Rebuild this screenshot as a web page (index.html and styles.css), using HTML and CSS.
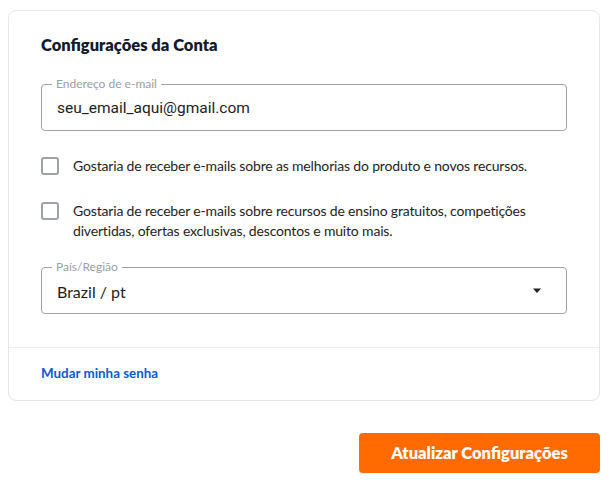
FILE: index.html
```html
<!DOCTYPE html>
<html lang="pt">
<head>
<meta charset="utf-8">
<link rel="stylesheet" href="styles.css">
</head>
<body>
<div class="page">
  <section class="card">
    <div class="card-body">
      <h2 class="title">Configurações da Conta</h2>
      <div class="field">
        <span class="field-label">Endereço de e-mail</span>
        <span class="field-value email">seu_email_aqui@gmail.com</span>
      </div>
      <label class="check-row">
        <span class="box"></span>
        <span class="check-text">Gostaria de receber e-mails sobre as melhorias do produto e novos recursos.</span>
      </label>
      <label class="check-row">
        <span class="box"></span>
        <span class="check-text">Gostaria de receber e-mails sobre recursos de ensino gratuitos, competições divertidas, ofertas exclusivas, descontos e muito mais.</span>
      </label>
      <div class="field select">
        <span class="field-label">País/Região</span>
        <span class="field-value">Brazil / pt</span>
        <svg class="caret" width="10" height="6" viewBox="0 0 10 6"><path d="M1 0.5h8L5 5z" fill="#222"/></svg>
      </div>
    </div>
    <div class="card-foot">
      <a class="link">Mudar minha senha</a>
    </div>
  </section>
  <div class="actions">
    <button class="btn">Atualizar Configurações</button>
  </div>
</div>
</body>
</html>
```
FILE: styles.css
```css
* { box-sizing: border-box; }
html, body { margin: 0; background: #fff; }
body { font-family: Lato, "Noto Sans", sans-serif; color: #222; }
.page { padding: 10px 16px 0 8px; }
.card {
  border: 1px solid #e4e6ea;
  border-radius: 8px;
  display: flex;
  flex-direction: column;
}
.card-body {
  padding: 24px 32px 33px 32px;
  display: flex;
  flex-direction: column;
  border-bottom: 1px solid #eceef1;
}
.title {
  margin: 0 0 29px 0;
  font-size: 16.5px;
  line-height: 20px;
  font-weight: 800;
  color: #141a2b;
}
.field {
  position: relative;
  height: 47px;
  border: 1px solid #9ea2a8;
  border-radius: 4px;
  display: flex;
  align-items: center;
  padding: 0 15px;
}
.field-label {
  position: absolute;
  left: 10px;
  top: -8px;
  padding: 0 4px;
  background: #fff;
  font-size: 12px;
  line-height: 14px;
  color: #9a9ea5;
}
.field-value {
  font-size: 16px;
  color: #1c1c1c;
  padding-top: 1px;
}
.field-value.email { font-family: Roboto, "Noto Sans", sans-serif; font-size: 15.5px; }
.select { justify-content: space-between; margin-top: 26px; }
.caret { margin-right: 9px; }
.check-row {
  display: flex;
  align-items: flex-start;
  gap: 14px;
  margin-top: 25px;
}
.box {
  flex: none;
  width: 18px;
  height: 18px;
  margin-top: 1px;
  border: 2px solid #9ea2a8;
  border-radius: 3px;
}
.check-text {
  font-size: 14px;
  line-height: 20px;
  letter-spacing: -0.17px;
  color: #1e1e1e;
}
.card-foot {
  padding: 14px 32px 17px 32px;
}
.link {
  font-size: 13.4px;
  line-height: 20px;
  font-weight: 700;
  color: #0b5ad6;
}
.actions {
  display: flex;
  justify-content: flex-end;
  margin-top: 32px;
}
.btn {
  width: 241px;
  height: 40px;
  border: 0;
  border-radius: 4px;
  background: #ff6b00;
  color: #fff;
  font-family: Lato, sans-serif;
  font-weight: 800;
  font-size: 16.5px;
}
```
